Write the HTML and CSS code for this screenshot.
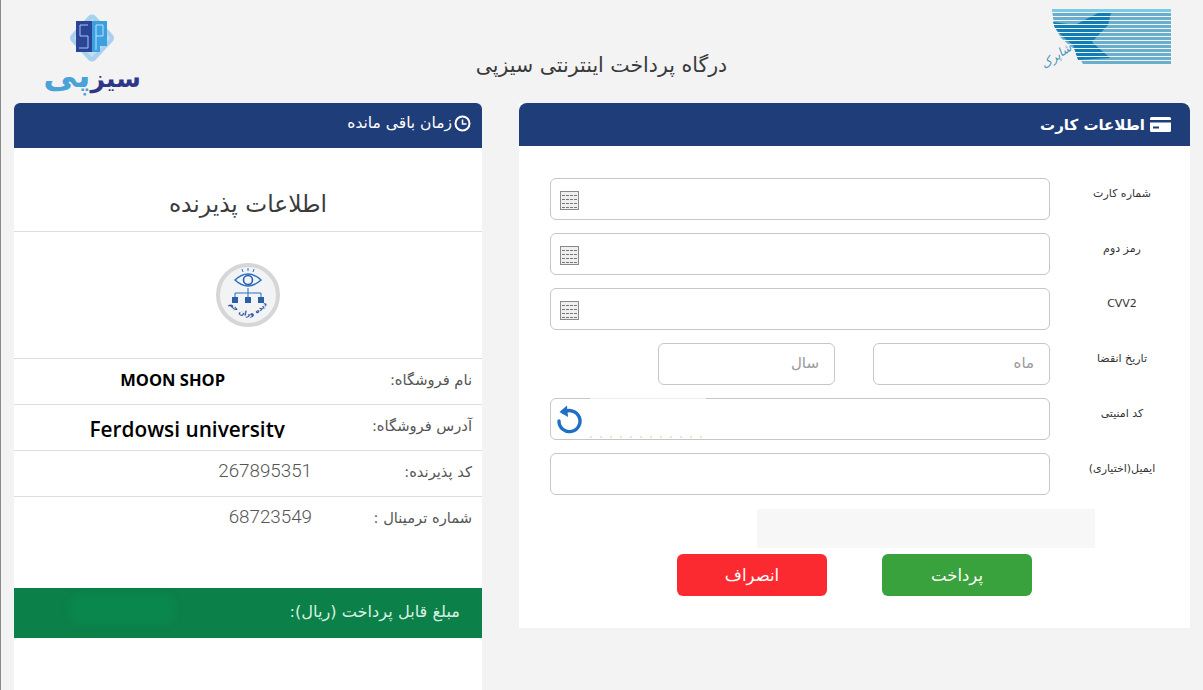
FILE: index.html
```html
<!DOCTYPE html>
<html lang="fa">
  <head>
    <meta charset="UTF-8" />
    <meta name="viewport" content="width=device-width, initial-scale=1.0" />
    <title>درگاه پرداخت اینترنتی سیزپی</title>
    <link rel="stylesheet" href="styles.css">
  </head>
  <body>

    <header class="top-bar">
      <div class="logo-sizpay">
        <svg class="logo-mark" width="46" height="48" viewBox="0 0 46 48">
          <path d="M20 1.5 Q23 -0.5 26 1.5 L44 21 Q46 24 44 27 L26 46.5 Q23 48.5 20 46.5 L2 27 Q0 24 2 21 Z" fill="#a9d0ec"/>
          <path d="M23 5 L41 24 L23 43 L5 24 Z" fill="#c5dff2"/>
          <rect x="7" y="7" width="16" height="31" fill="#2b4596"/>
          <path d="M23 7 H38 V32 H31 V38 H23 Z" fill="#3ba0e0"/>
          <path d="M19 11 H11 V22 H19 V34 H10" fill="none" stroke="#a8c4ee" stroke-width="1"/>
          <path d="M27 36 V11 H34 V22 H27" fill="none" stroke="#bfe0f6" stroke-width="1"/>
        </svg>
        <div class="logo-word" dir="rtl"><span class="logo-dark">سیز</span><span class="logo-light">پی</span></div>
      </div>
      <h1 class="page-title">درگاه پرداخت اینترنتی سیزپی</h1>
      <div class="logo-shaparak">
        <svg width="135" height="70" viewBox="0 0 135 70">
          <path d="M15 9 H134 V64 H46 L38 50 L24 38 L17 26 Z" fill="#6aaecd"/>
          <path d="M16 22 L38 25 L61 13 L74 13 L71 25 L55 42 L73 58 L41 60 L36 45 L26 37 L18 28 Z" fill="#0f7db6"/>
          <path d="M15 9 H134 V12 H15 Z" fill="#7ccbe5"/>
          <g fill="none" stroke="#f3f3f4" stroke-width="1.2">
            <path d="M10 12.5 H135 M10 16.5 H135 M10 20.5 H135 M10 24.5 H135 M10 28.5 H135 M10 32.5 H135 M10 36.5 H135 M10 40.5 H135 M10 44.5 H135 M10 48.5 H135 M10 52.5 H135 M10 56.5 H135 M10 60.5 H135"/>
          </g>
        </svg>
        <span class="shaparak-word">شاپرک</span>
      </div>
    </header>

    <main class="columns">
      <section class="side-panel">
        <div class="side-head" dir="rtl">
          <svg class="clock-icon" width="17" height="17" viewBox="0 0 17 17">
            <circle cx="8.5" cy="8.5" r="7" fill="none" stroke="#fff" stroke-width="2"/>
            <path d="M8.5 4.5 V9 H12.5" fill="none" stroke="#fff" stroke-width="1.6"/>
          </svg>
          <span>زمان باقی مانده</span>
        </div>
        <h2 class="side-title">اطلاعات پذیرنده</h2>
        <div class="merchant-logo">
          <div class="merchant-circle">
            <svg width="56" height="56" viewBox="0 0 56 56">
              <path d="M15 13 Q28 1 41 13 Q28 25 15 13 Z" fill="none" stroke="#2a6fc0" stroke-width="1.5"/>
              <circle cx="28" cy="13" r="4.5" fill="none" stroke="#2a5ea8" stroke-width="1.6"/>
              <path d="M28 21 V30 M15 26 H41 M15 26 V30 M41 26 V30 M22 2 L23 5 M28 1 V4 M34 2 L33 5" fill="none" stroke="#2a6fc0" stroke-width="1"/>
              <rect x="12" y="30" width="6" height="6" fill="#2a5ea8"/>
              <rect x="25" y="30" width="6" height="6" fill="#2a5ea8"/>
              <rect x="38" y="30" width="6" height="6" fill="#2a5ea8"/>
              <defs><path id="merchant-arc" d="M8 36 Q28 62 48 36"/></defs>
              <text class="merchant-name" text-anchor="middle"><textPath href="#merchant-arc" startOffset="50%">دیده وران جم</textPath></text>
            </svg>
          </div>
        </div>
        <div class="info-row">
          <span class="info-value shop-name">MOON SHOP</span>
          <span class="info-label">نام فروشگاه:</span>
        </div>
        <div class="info-row">
          <span class="info-value shop-address">Ferdowsi university</span>
          <span class="info-label">آدرس فروشگاه:</span>
        </div>
        <div class="info-row">
          <span class="info-value">267895351</span>
          <span class="info-label">کد پذیرنده:</span>
        </div>
        <div class="info-row">
          <span class="info-value">68723549</span>
          <span class="info-label">شماره ترمینال :</span>
        </div>
        <div class="amount-bar" dir="rtl">
          <span>مبلغ قابل پرداخت (ریال):</span>
          <span class="amount-blur"></span>
        </div>
      </section>

      <section class="card-panel">
        <div class="card-head" dir="rtl">
          <svg width="21" height="15" viewBox="0 0 21 15">
            <path d="M0 1.5 Q0 0 1.5 0 H19.5 Q21 0 21 1.5 V3 H0 Z M0 5.5 H21 V13.5 Q21 15 19.5 15 H1.5 Q0 15 0 13.5 Z" fill="#fff"/>
            <rect x="3" y="9.5" width="6" height="2" fill="#1f3d78"/>
          </svg>
          <span>اطلاعات کارت</span>
        </div>
        <form class="card-form">
          <div class="form-row">
            <div class="field keypad-field"><span class="keypad"></span></div>
            <label class="form-label">شماره کارت</label>
          </div>
          <div class="form-row">
            <div class="field keypad-field"><span class="keypad"></span></div>
            <label class="form-label">رمز دوم</label>
          </div>
          <div class="form-row">
            <div class="field keypad-field"><span class="keypad"></span></div>
            <label class="form-label">CVV2</label>
          </div>
          <div class="form-row">
            <div class="expiry">
              <div class="field expiry-field">سال</div>
              <div class="field expiry-field">ماه</div>
            </div>
            <label class="form-label">تاریخ انقضا</label>
          </div>
          <div class="form-row">
            <div class="field captcha-field">
              <svg width="30" height="30" viewBox="0 0 30 30">
                <path d="M9.5 8.5 A10.5 10.5 0 1 1 5 17" fill="none" stroke="#1f6fc4" stroke-width="3.4" stroke-linecap="round"/>
                <path d="M13 1.5 L5.5 8 L14 13 Z" fill="#1f6fc4"/>
              </svg>
              <span class="captcha-image"></span>
            </div>
            <label class="form-label">کد امنیتی</label>
          </div>
          <div class="form-row">
            <div class="field"></div>
            <label class="form-label">ایمیل(اختیاری)</label>
          </div>
          <div class="message-box"></div>
          <div class="buttons">
            <button type="button" class="btn btn-cancel">انصراف</button>
            <button type="button" class="btn btn-pay">پرداخت</button>
          </div>
        </form>
      </section>
    </main>

  </body>
</html>
```

FILE: styles.css
```css
* {
  box-sizing: border-box;
}

html, body {
  height: 690px;
  overflow: hidden;
}

body {
  margin: 0;
  background-color: #f3f3f4;
  border-left: 1px solid #8a8a8a;
  font-family: "DejaVu Sans", sans-serif;
  color: #333;
}

.top-bar {
  height: 103px;
  display: flex;
  align-items: flex-start;
  justify-content: space-between;
  padding: 0 31px 0 45px;
}

.logo-sizpay {
  width: 92px;
  padding-top: 14px;
  display: flex;
  flex-direction: column;
  align-items: center;
}

.logo-mark {
  display: block;
  flex: none;
}

.logo-word {
  margin-top: -5px;
  line-height: 36px;
  font-weight: bold;
  white-space: nowrap;
}

.logo-dark {
  font-size: 25px;
  color: #2f3587;
}

.logo-light {
  font-size: 34px;
  color: #4aa3d8;
}

.page-title {
  margin: 49px 0 0 28px;
  font-size: 20.5px;
  line-height: 32px;
  font-weight: normal;
  color: #3a3a3a;
}

.logo-shaparak {
  position: relative;
}

.shaparak-word {
  position: absolute;
  left: 2px;
  top: 48px;
  font-size: 12px;
  line-height: 16px;
  font-style: italic;
  color: #4d93b5;
  transform: rotate(-35deg);
}

.columns {
  display: flex;
  align-items: flex-start;
  padding: 0 12px 0 13px;
  gap: 37px;
}

.side-panel {
  width: 468px;
  height: 587px;
  background-color: #fff;
  border-radius: 6px 6px 0 0;
}

.side-head {
  height: 45px;
  background-color: #1f3d78;
  border-radius: 6px 6px 0 0;
  color: #fff;
  font-size: 15.5px;
  display: flex;
  align-items: center;
  gap: 2px;
  padding: 0 11px 5px;
}

.side-title {
  margin: 0;
  height: 84px;
  border-bottom: 1px solid #ddd;
  text-align: center;
  font-size: 23.3px;
  line-height: 112px;
  font-weight: normal;
  color: #3c3c3c;
}

.merchant-logo {
  height: 126px;
  display: flex;
  justify-content: center;
  padding-top: 31px;
}

.merchant-circle {
  width: 64px;
  height: 64px;
  border-radius: 50%;
  background-color: #f2f3f5;
  border: 4px solid #d6d6d6;
  overflow: hidden;
}

.merchant-circle svg {
  display: block;
}

.merchant-name {
  font-size: 7px;
  font-weight: bold;
  fill: #1f4f9a;
}

.info-row {
  height: 46px;
  border-top: 1px solid #ddd;
  display: flex;
  align-items: center;
  justify-content: space-between;
  padding: 0 10px 0 0;
}

.info-row:last-of-type {
  border-bottom: 1px solid #ddd;
  height: 47px;
}

.info-value {
  width: 298px;
  text-align: right;
  font-family: Roboto, sans-serif;
  font-weight: 300;
  font-size: 18.8px;
  color: #555;
  margin-top: -6px;
}

.info-label {
  font-size: 14.7px;
  color: #555;
  direction: rtl;
  margin-top: -5px;
}

.shop-name {
  width: 211px;
  margin-right: 87px;
  font-family: "Open Sans", sans-serif;
  font-weight: bold;
  font-size: 16.5px;
  color: #000;
  margin-top: -4px;
}

.shop-address {
  width: 271px;
  margin-right: 27px;
  height: 33px;
  overflow: hidden;
  font-family: "Open Sans", sans-serif;
  font-weight: 600;
  font-size: 20.8px;
  color: #000;
  padding-top: 11px;
  margin-top: 0;
  align-self: flex-start;
  line-height: 27px;
}

.amount-bar {
  margin-top: 46px;
  height: 50px;
  background-color: #0b8048;
  color: #d9f0e2;
  font-size: 16.2px;
  line-height: 47px;
  padding: 0 22px 0 56px;
  display: flex;
  justify-content: space-between;
  align-items: flex-start;
}

.amount-blur {
  width: 105px;
  height: 30px;
  margin-top: 6px;
  border-radius: 12px;
  background-color: #0a874c;
  filter: blur(3px);
}

.card-panel {
  width: 671px;
  height: 525px;
  background-color: #fff;
}

.card-head {
  height: 43px;
  background-color: #1f3d78;
  border-radius: 8px 8px 0 0;
  color: #fff;
  font-size: 15px;
  font-weight: bold;
  display: flex;
  align-items: center;
  gap: 5px;
  padding: 0 19px;
}

.card-form {
  padding: 32px 18px 0 31px;
  display: flex;
  flex-direction: column;
  gap: 13px;
}

.form-row {
  display: flex;
  justify-content: space-between;
  align-items: flex-start;
}

.field {
  width: 500px;
  height: 42px;
  background-color: #fff;
  border: 1px solid #c6c6c6;
  border-radius: 6px;
}

.keypad-field {
  display: flex;
  align-items: center;
  padding: 2px 0 0 9px;
}

.keypad {
  width: 19px;
  height: 19px;
  border: 1px solid #8a8a8a;
  background-color: #efefef;
  background-image: linear-gradient(#efefef 0 3px, transparent 3px), linear-gradient(90deg, #777 0 3px, transparent 3px);
  background-size: 4px 4px;
  background-position: 1px 0;
}

.expiry {
  width: 392px;
  margin-left: 108px;
  display: flex;
  justify-content: space-between;
}

.expiry-field {
  width: 177px;
  text-align: right;
  color: #9a9a9a;
  font-size: 15px;
  line-height: 38px;
  padding-right: 15px;
  direction: rtl;
}

.captcha-field {
  display: flex;
  align-items: center;
  padding-left: 3px;
}

.captcha-image {
  width: 116px;
  height: 42px;
  margin: -1px 0 -1px 6px;
  border-top: 1px solid #eee;
  background-image: repeating-linear-gradient(90deg, #eee6c8 0 2px, transparent 2px 10px);
  background-size: 100% 2px;
  background-position: 0 37px;
  background-repeat: no-repeat;
}

.form-label {
  width: 100px;
  margin-top: 8px;
  text-align: center;
  font-size: 11px;
  line-height: 16px;
  color: #333;
  direction: rtl;
}

.message-box {
  width: 338px;
  height: 39px;
  margin: 1px 0 0 207px;
  background-color: #f7f7f8;
}

.buttons {
  margin-top: -7px;
  padding-left: 127px;
  display: flex;
  gap: 55px;
}

.btn {
  width: 150px;
  height: 42px;
  border: none;
  border-radius: 6px;
  color: #fff;
  font-family: "DejaVu Sans", sans-serif;
  font-size: 16.5px;
}

.btn-cancel {
  background-color: #fb2a30;
}

.btn-pay {
  background-color: #39a23c;
}
```
